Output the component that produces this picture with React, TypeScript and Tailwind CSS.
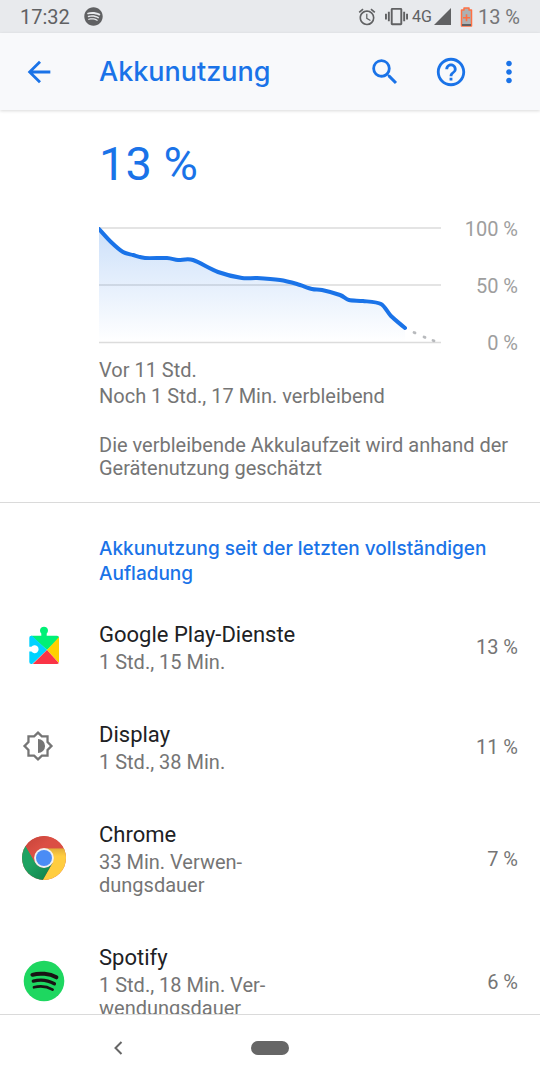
import React from "react";
import { FaSpotify } from "react-icons/fa";
import { MdAlarm, MdArrowBack, MdHelpOutline, MdMoreVert, MdSearch, MdVibration } from "react-icons/md";

type Point = [number, number];

const levels: Point[] = [
  [0, 2], [12, 15], [24, 25], [34, 28], [46, 31], [68, 31], [79, 33], [94, 33],
  [119, 45], [143, 51], [158, 51], [181, 53], [198, 57], [213, 62], [223, 63],
  [241, 68], [250, 73], [264, 74], [282, 77], [292, 89], [306, 101],
];

function smoothPath(points: Point[]): string {
  let d = `M${points[0][0]} ${points[0][1]}`;
  for (let i = 0; i < points.length - 1; i++) {
    const before = points[Math.max(i - 1, 0)];
    const from = points[i];
    const to = points[i + 1];
    const after = points[Math.min(i + 2, points.length - 1)];
    d += ` C${from[0] + (to[0] - before[0]) / 7} ${from[1] + (to[1] - before[1]) / 7}`;
    d += ` ${to[0] - (after[0] - from[0]) / 7} ${to[1] - (after[1] - from[1]) / 7} ${to[0]} ${to[1]}`;
  }
  return d;
}

function BatteryChart() {
  const line = smoothPath(levels);
  return (
    <svg className="h-[118px] min-w-0 flex-1" viewBox="0 0 342 118" preserveAspectRatio="none" role="img" aria-label="Akkustand">
      <defs>
        <linearGradient id="level-fill" x1="0" y1="0" x2="0" y2="1">
          <stop offset="0" stopColor="#1a73e8" stopOpacity="0.22" />
          <stop offset="1" stopColor="#1a73e8" stopOpacity="0" />
        </linearGradient>
      </defs>
      <path d="M0 1H342M0 58H342M0 115.5H342" stroke="#dcdcdc" strokeWidth="1.4" />
      <path d={`${line} V115 H0Z`} fill="url(#level-fill)" />
      <path d={line} fill="none" stroke="#1a73e8" strokeWidth="4" strokeLinecap="round" strokeLinejoin="round" />
      <path d="M315 105.500l1 .4M325 110l1 .4M334 113.500l1 .3" stroke="#b8babd" strokeWidth="2.800" strokeLinecap="round" />
    </svg>
  );
}

function PlayServicesIcon() {
  return (
    <svg className="size-11" viewBox="0 -3 44 44" aria-hidden="true">
      <defs>
        <clipPath id="puzzle">
          <path d="M9.300 8.700h10V6.600a4 4 0 1 1 5.400 0v2.100h10.300a2 2 0 0 1 2 2v24.300a2 2 0 0 1-2 2H9.300a2 2 0 0 1-2-2V24.600h2.100a4 4 0 1 0 0-4.800H7.300V10.700a2 2 0 0 1 2-2z" />
        </clipPath>
      </defs>
      <g clipPath="url(#puzzle)">
        <path d="M0 -3H44V5L25 23 9 8.700z" fill="#00f076" />
        <path d="M7 6L25 23 7 40z" fill="#00d2ff" />
        <path d="M38 9L25 23 38 37z" fill="#ffd000" />
        <path d="M9.800 38L25 23 38.500 38z" fill="#fa3446" />
      </g>
    </svg>
  );
}

function DisplayIcon() {
  return (
    <svg className="size-8" viewBox="0 0 24 24" fill="#757575" aria-hidden="true">
      <path fillRule="evenodd" d="M20 8.690V4h-4.690L12 .69 8.690 4H4v4.690L.69 12 4 15.310V20h4.690L12 23.310 15.310 20H20v-4.690L23.310 12 20 8.690zM18.300 14.600V18.300H14.600L12 20.900 9.400 18.300H5.700V14.600L3.100 12 5.700 9.400V5.700H9.400L12 3.100 14.600 5.700H18.300V9.400L20.900 12 18.300 14.600z" />
      <path d="M12 6.700a5.300 5.300 0 0 1 0 10.600z" />
    </svg>
  );
}

function ChromeIcon() {
  return (
    <svg className="size-11" viewBox="0 0 44 44" aria-hidden="true">
      <defs>
        <clipPath id="chrome-disc"><circle cx="22" cy="22" r="22" /></clipPath>
        <linearGradient id="chrome-red" x1="0" y1="0" x2="1" y2="1">
          <stop offset="0" stopColor="#c5443a" />
          <stop offset="0.400" stopColor="#db4f44" />
        </linearGradient>
        <linearGradient id="chrome-green" x1="0" y1="0" x2="1" y2="1">
          <stop offset="0.400" stopColor="#1ea362" />
          <stop offset="1" stopColor="#117d48" />
        </linearGradient>
        <linearGradient id="chrome-yellow" x1="0" y1="0" x2="0" y2="1">
          <stop offset="0" stopColor="#e0ad38" />
          <stop offset="0.250" stopColor="#ffcd40" />
        </linearGradient>
      </defs>
      <g clipPath="url(#chrome-disc)">
        <rect width="44" height="44" fill="#db4f44" />
        <path d="M22 12.200H44V44H20.800L30.500 27z" fill="url(#chrome-yellow)" />
        <path d="M3.600 10L13.500 27C16 32 25 34 30.500 27L20.800 44H0V10z" fill="url(#chrome-green)" />
        <path d="M3.600 10C8 3 15 0 22 0 31 0 38 5 41.700 12.200H22A9.800 9.800 0 0 0 13.500 27z" fill="url(#chrome-red)" />
      </g>
      <circle cx="22" cy="22" r="9.900" fill="#f1f1f1" />
      <circle cx="22" cy="22" r="8" fill="#4a8cf5" />
    </svg>
  );
}

function SpotifyIcon() {
  return (
    <svg className="size-11" viewBox="0 0 44 44" aria-hidden="true">
      <circle cx="22" cy="22" r="20.300" fill="#1ed760" />
      <g fill="none" stroke="#191414" strokeLinecap="round">
        <path d="M10.400 15.800C17.500 13.700 27.500 14.500 34.400 18.300" strokeWidth="4" />
        <path d="M11.300 22.100C18 20.300 26 21.100 32.400 24.800" strokeWidth="3.300" />
        <path d="M12 28.300C18 26.700 24.800 27.300 30.600 30.600" strokeWidth="2.700" />
      </g>
    </svg>
  );
}

const apps = [
  { name: "Google Play-Dienste", detail: "1 Std., 15 Min.", share: "13 %", icon: <PlayServicesIcon /> },
  { name: "Display", detail: "1 Std., 38 Min.", share: "11 %", icon: <DisplayIcon /> },
  { name: "Chrome", detail: "33 Min. Ver\u00ADwen\u00ADdungs\u00ADdauer", share: "7 %", icon: <ChromeIcon /> },
  { name: "Spotify", detail: "1 Std., 18 Min. Ver\u00ADwen\u00ADdungs\u00ADdauer", share: "6 %", icon: <SpotifyIcon /> },
];

function StatusBar() {
  return (
    <div className="flex h-[33px] shrink-0 items-center bg-[#e8eaed] px-5 text-xl text-[#606163]">
      <span>17:32</span>
      <FaSpotify className="ml-[14px] size-[19px]" />
      <div className="ml-auto flex items-center">
        <MdAlarm className="size-5" />
        <MdVibration className="ml-2 size-[23px]" />
        <span className="ml-1 text-base">4G</span>
        <svg className="ml-[2px] size-[17px]" viewBox="0 0 17 17" fill="currentColor" aria-hidden="true"><path d="M0 17L17 0V17z" /></svg>
        <svg className="ml-[9px] h-5 w-[13px]" viewBox="0 0 13 20" aria-hidden="true">
          <path d="M4 1h5v2h2.500v16h-10V3H4z" fill="#adb0b2" stroke="#ff7043" strokeWidth="1.500" strokeLinejoin="round" />
          <path d="M2 17h9v2H2z" fill="#606163" />
          <path d="M6.500 7.300v7M3 10.800h7" stroke="#ff7043" strokeWidth="1.600" />
        </svg>
        <span className="ml-[5px] text-[#757678]">13 %</span>
      </div>
    </div>
  );
}

export default function App() {
  return (
    <div lang="de" className="flex h-screen flex-col overflow-hidden bg-white font-['Roboto',sans-serif] text-[#757575]">
      <StatusBar />
      <header className="z-10 flex h-[77px] shrink-0 items-center bg-[#f8f9fb] pr-[14px] pl-[22px] text-[#1a73e8] shadow-[0_1px_3px_rgba(0,0,0,0.15)]">
        <button type="button" aria-label="Zurück" className="w-[77px]"><MdArrowBack className="size-[34px]" /></button>
        <h1 className="flex-1 font-['Inter',sans-serif] text-[27px] leading-9 font-medium">Akkunutzung</h1>
        <button type="button" aria-label="Suchen"><MdSearch className="size-[34px]" /></button>
        <button type="button" aria-label="Hilfe" className="ml-8"><MdHelpOutline className="size-[34px]" /></button>
        <button type="button" aria-label="Weitere Optionen" className="ml-6"><MdMoreVert className="size-[34px]" /></button>
      </header>
      <main className="min-h-0 flex-1 overflow-y-auto [scrollbar-width:none]">
        <section className="border-b border-[#dadada] pr-[22px] pb-[22px] pl-[99px]">
          <p className="pt-[22px] text-[47px] leading-[64px] text-[#1a73e8]">13 %</p>
          <div className="mt-[21px] flex h-[138px] items-center">
            <BatteryChart />
            <div className="flex h-full w-[77px] flex-col justify-between text-right text-xl leading-6 text-[#9e9e9e]">
              <span>100 %</span>
              <span>50 %</span>
              <span>0 %</span>
            </div>
          </div>
          <p className="mt-[2px] text-xl leading-[26px]">Vor 11 Std.<br />Noch 1 Std., 17 Min. verbleibend</p>
          <p className="mt-[25px] text-xl leading-[23px]">Die verbleibende Akkulaufzeit wird anhand der Gerätenutzung geschätzt</p>
        </section>
        <h2 className="pt-[33px] pr-[22px] pb-[10px] pl-[99px] font-['Inter',sans-serif] text-[19px] leading-[25px] font-medium text-[#1a73e8]">
          Akkunutzung seit der letzten vollständigen Aufladung
        </h2>
        <ul>
          {apps.map((app) => (
            <li key={app.name} className="flex items-center px-[22px] pt-6 pb-[22px]">
              <div className="w-[77px] shrink-0 pb-[2px]">{app.icon}</div>
              <div className="min-w-0 flex-1">
                <h3 className="text-[22px] leading-[29px] text-[#202124]">{app.name}</h3>
                <p className="mt-[2px] max-w-[178px] text-xl leading-[23px]">{app.detail}</p>
              </div>
              <span className="text-xl leading-6">{app.share}</span>
            </li>
          ))}
        </ul>
      </main>
      <nav className="grid h-[66px] shrink-0 grid-cols-[1fr_38px_1fr] items-center border-t border-[#dadada] text-[#666666]">
        <button type="button" aria-label="Zurück" className="mr-4 justify-self-center">
          <svg className="h-4 w-3" viewBox="0 0 12 16" fill="none" stroke="currentColor" strokeWidth="2" aria-hidden="true"><path d="M9.500 2L3.500 8l6 6" /></svg>
        </button>
        <button type="button" aria-label="Startbildschirm" className="h-[14px] rounded-full bg-[#666666]" />
      </nav>
    </div>
  );
}
